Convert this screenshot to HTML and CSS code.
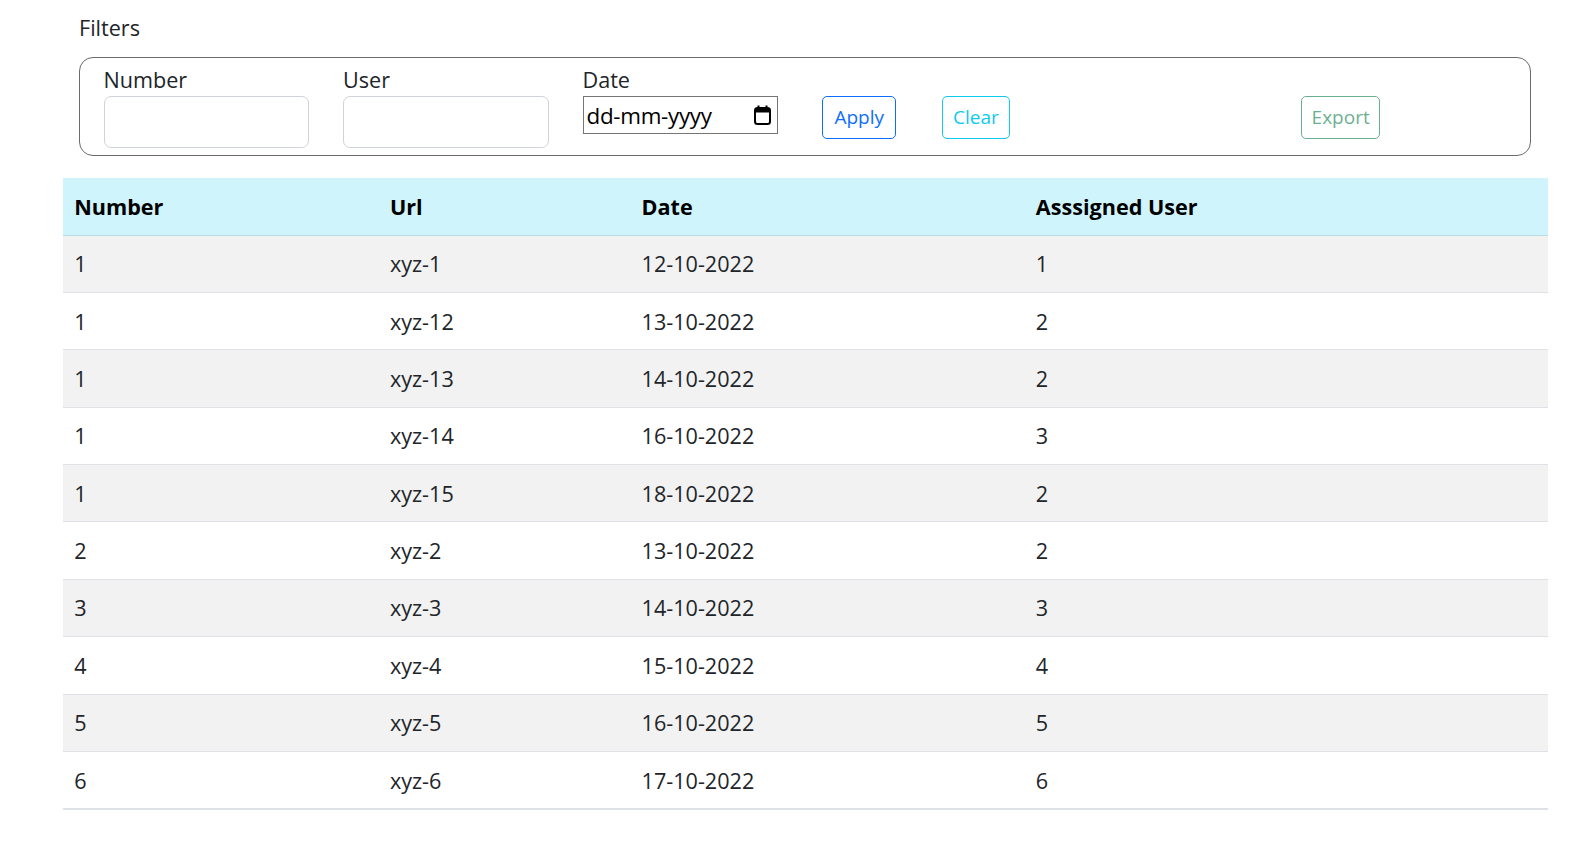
FILE: index.html
```html
<!DOCTYPE html>
<html lang="en">
<head>
<meta charset="utf-8">
<title>Filters</title>
<link rel="stylesheet" href="styles.css">
</head>
<body>
<div class="page">
  <div class="filters-title">Filters</div>
  <div class="filters">
    <div class="cell span-2">
      <label class="form-label">Number</label>
      <div class="form-control"></div>
    </div>
    <div class="cell span-2">
      <label class="form-label">User</label>
      <div class="form-control"></div>
    </div>
    <div class="cell span-2">
      <label class="form-label">Date</label>
      <div class="date-input">
        <span class="date-text">dd-mm-yyyy</span>
        <svg class="cal-icon" width="17" height="20" viewBox="0 0 17 20" aria-hidden="true">
          <path d="M4.5 0.5v3M12.5 0.5v3" stroke="#000" stroke-width="2" fill="none"/>
          <rect x="1" y="3" width="15" height="16" rx="2.5" fill="none" stroke="#000" stroke-width="2"/>
          <rect x="1" y="3" width="15" height="4.5" fill="#000"/>
        </svg>
      </div>
    </div>
    <div class="cell span-1 btn-cell">
      <button class="btn btn-apply">Apply</button>
    </div>
    <div class="cell span-3 btn-cell">
      <button class="btn btn-clear">Clear</button>
    </div>
    <div class="cell span-1 btn-cell">
      <button class="btn btn-export">Export</button>
    </div>
  </div>

  <table class="data-table">
    <colgroup>
      <col class="c-num"><col class="c-url"><col class="c-date"><col class="c-user">
    </colgroup>
    <thead>
      <tr><th>Number</th><th>Url</th><th>Date</th><th>Asssigned User</th></tr>
    </thead>
    <tbody>
      <tr><td>1</td><td>xyz-1</td><td>12-10-2022</td><td>1</td></tr>
      <tr><td>1</td><td>xyz-12</td><td>13-10-2022</td><td>2</td></tr>
      <tr><td>1</td><td>xyz-13</td><td>14-10-2022</td><td>2</td></tr>
      <tr><td>1</td><td>xyz-14</td><td>16-10-2022</td><td>3</td></tr>
      <tr><td>1</td><td>xyz-15</td><td>18-10-2022</td><td>2</td></tr>
      <tr><td>2</td><td>xyz-2</td><td>13-10-2022</td><td>2</td></tr>
      <tr><td>3</td><td>xyz-3</td><td>14-10-2022</td><td>3</td></tr>
      <tr><td>4</td><td>xyz-4</td><td>15-10-2022</td><td>4</td></tr>
      <tr><td>5</td><td>xyz-5</td><td>16-10-2022</td><td>5</td></tr>
      <tr><td>6</td><td>xyz-6</td><td>17-10-2022</td><td>6</td></tr>
    </tbody>
  </table>
</div>
</body>
</html>
```

FILE: styles.css
```css
* { box-sizing: border-box; }

html, body {
  margin: 0;
  padding: 0;
  background: #fff;
}

body {
  font-family: "Open Sans", "Noto Sans", "Liberation Sans", sans-serif;
  font-size: 21.6px;
  line-height: 33.6px;
  color: #212529;
}

.page {
  padding: 11px 48px 0 63px;
}

.filters-title {
  margin-left: 16px;
  height: 33.6px;
}

.filters {
  margin: 12px 17px 0 16px;
  border: 1px solid #6b6b6b;
  border-radius: 14px;
  padding: 5px 6.5px 7px;
  display: grid;
  grid-template-columns: repeat(12, 1fr);
  align-items: start;
}

.cell {
  padding: 0 17px;
  display: flex;
  flex-direction: column;
  align-items: flex-start;
}

.span-1 { grid-column: span 1; }
.span-2 { grid-column: span 2; }
.span-3 { grid-column: span 3; }

.form-label {
  display: block;
  height: 33.6px;
}

.form-control {
  width: 100%;
  height: 52px;
  border: 1px solid #ced4da;
  border-radius: 7px;
  background: #fff;
}

.date-input {
  width: 195px;
  height: 38px;
  border: 1px solid #767676;
  display: flex;
  align-items: center;
  justify-content: space-between;
  padding: 0 6px 0 3px;
  color: #000;
  background: #fff;
}

.date-text {
  line-height: 30px;
  padding-top: 2px;
  font-size: 22.4px;
  letter-spacing: -0.3px;
}

.cal-icon {
  display: block;
  flex: none;
  margin-top: -1px;
}

.btn-cell {
  padding-top: 33.6px;
}

.btn {
  font-family: inherit;
  font-size: 19px;
  line-height: 29.4px;
  height: 42.7px;
  padding: 1px 0 0;
  background: #fff;
  border-radius: 5px;
  border: 1px solid;
  white-space: nowrap;
  text-align: center;
}

.btn-apply {
  width: 74.4px;
  color: #0d6efd;
  border-color: #0d6efd;
}

.btn-clear {
  width: 68.4px;
  color: #0dcaf0;
  border-color: #0dcaf0;
}

.btn-export {
  width: 79.3px;
  color: #198754;
  border-color: #198754;
  opacity: 0.65;
}

.data-table {
  margin-top: 22px;
  width: 100%;
  border-collapse: collapse;
  table-layout: fixed;
}

.c-num { width: 315.7px; }
.c-url { width: 251.7px; }
.c-date { width: 394.3px; }

.data-table th,
.data-table td {
  text-align: left;
  padding: 11.6px 11.2px 10.7px;
  line-height: 34.1px;
  border-bottom: 1px solid #dee2e6;
  vertical-align: top;
}

.data-table th {
  font-weight: 700;
  color: #000;
  background: #cff4fc;
  border-bottom-color: #badce3;
}

.data-table td {
  color: #212529;
}

.data-table tbody tr:nth-child(odd) td {
  background: #f2f2f2;
}

.data-table tbody tr:last-child td {
  border-bottom: 2px solid #dee2e6;
}
```
